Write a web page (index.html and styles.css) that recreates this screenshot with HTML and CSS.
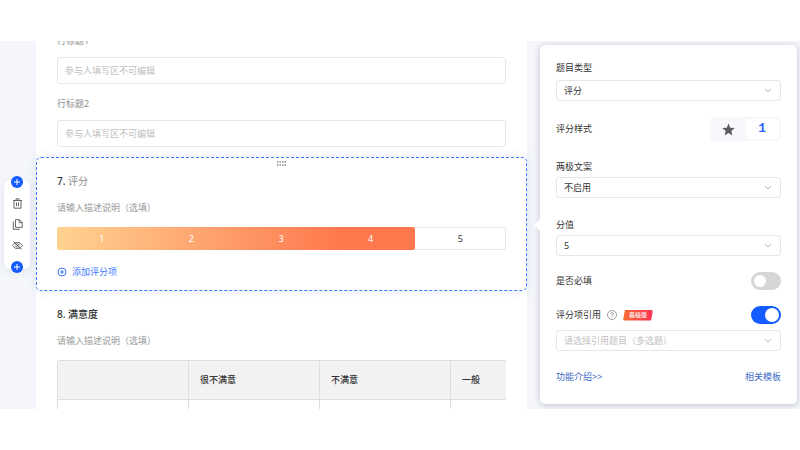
FILE: index.html
```html
<!DOCTYPE html>
<html lang="zh-CN">

<head>
    <meta charset="UTF-8">
    <meta name="viewport" content="width=device-width, initial-scale=1.0">
    <title>问卷编辑</title>
    <link rel="stylesheet" href="styles.css">
</head>

<body>
    <div class="editor">
        <aside class="rail">
            <div class="tools">
                <button class="add" aria-label="在上方添加">
                    <svg viewBox="0 0 12 12"><path d="M6 3v6M3 6h6"/></svg>
                </button>
                <button class="tool" aria-label="删除">
                    <svg viewBox="0 0 11 11"><path d="M1 2.5h9M4 2.5V.8h3v1.7M2 2.5v7.7h7V2.5M4.5 4.5v3.7M6.5 4.5v3.7"/></svg>
                </button>
                <button class="tool" aria-label="复制">
                    <svg viewBox="0 0 11 11"><path d="M3.5.7h4l2.7 2.7v5H3.5zM7.2.7v3h3M1.3 2.5v7.8h6.5"/></svg>
                </button>
                <button class="tool" aria-label="隐藏">
                    <svg viewBox="0 0 11 11"><path d="M.6 5.5C3 1.4 8 1.4 10.4 5.5C8 9.6 3 9.6 .6 5.5zM1.5 1.5l8 8"/><circle cx="5.5" cy="5.5" r="1.7"/></svg>
                </button>
                <button class="add" aria-label="在下方添加">
                    <svg viewBox="0 0 12 12"><path d="M6 3v6M3 6h6"/></svg>
                </button>
            </div>
        </aside>

        <main class="form">
            <section class="rows">
                <label for="row1">行标题1</label>
                <input type="text" id="row1" placeholder="参与人填写区不可编辑" readonly>
                <label for="row2">行标题2</label>
                <input type="text" id="row2" placeholder="参与人填写区不可编辑" readonly>
            </section>

            <section class="question active">
                <svg class="handle" viewBox="0 0 9 5"><path d="M0 1h9M0 4h9"/></svg>
                <h2>7. <span>评分</span></h2>
                <p class="desc">请输入描述说明（选填）</p>
                <div class="scale">
                    <div class="scale-on">
                        <button>1</button>
                        <button>2</button>
                        <button>3</button>
                        <button>4</button>
                    </div>
                    <button class="scale-off">5</button>
                </div>
                <button class="add-item">
                    <svg viewBox="0 0 10 10"><circle cx="5" cy="5" r="4"/><path d="M5 3v4M3 5h4"/></svg>
                    添加评分项
                </button>
            </section>

            <section class="question">
                <h2>8. 满意度</h2>
                <p class="desc">请输入描述说明（选填）</p>
                <div class="table-wrap">
                    <table>
                        <tr>
                            <th></th>
                            <th>很不满意</th>
                            <th>不满意</th>
                            <th>一般</th>
                            <th>满意</th>
                        </tr>
                        <tr>
                            <td></td>
                            <td></td>
                            <td></td>
                            <td></td>
                            <td></td>
                        </tr>
                    </table>
                </div>
            </section>
        </main>

        <aside class="panel">
            <div class="field">
                <label for="type">题目类型</label>
                <div class="select">
                    <select id="type"><option>评分</option></select>
                    <svg viewBox="0 0 8 6"><path d="M1 1l3 3 3-3"/></svg>
                </div>
            </div>

            <div class="line style-line">
                <span>评分样式</span>
                <div class="segment">
                    <label>
                        <input type="radio" name="style" aria-label="星形">
                        <svg viewBox="0 0 24 24"><path d="M12 1l3.2 7.7 8.3.7-6.3 5.4 1.9 8.1L12 18.6l-7.1 4.3 1.9-8.1L.5 9.4l8.3-.7z"/></svg>
                    </label>
                    <label>
                        <input type="radio" name="style" checked>
                        <span>1</span>
                    </label>
                </div>
            </div>

            <div class="field">
                <label for="poles">两极文案</label>
                <div class="select">
                    <select id="poles"><option>不启用</option></select>
                    <svg viewBox="0 0 8 6"><path d="M1 1l3 3 3-3"/></svg>
                </div>
            </div>

            <div class="field">
                <label for="score">分值</label>
                <div class="select">
                    <select id="score"><option>5</option></select>
                    <svg viewBox="0 0 8 6"><path d="M1 1l3 3 3-3"/></svg>
                </div>
            </div>

            <div class="line">
                <label for="required">是否必填</label>
                <input type="checkbox" class="switch" id="required">
            </div>

            <div class="line quote-line">
                <div class="with-tag">
                    <label for="quote">评分项引用</label>
                    <svg class="help" viewBox="0 0 10 10"><circle cx="5" cy="5" r="4.5"/><path d="M3.6 4c0-1.9 2.8-1.9 2.8-.1C6.4 4.9 5 4.9 5 6M5 6.9v.8"/></svg>
                    <span class="tag">高级版</span>
                </div>
                <input type="checkbox" class="switch" id="quote" checked>
            </div>
            <div class="select empty">
                <select aria-label="引用题目"><option>请选择引用题目（多选题）</option></select>
                <svg viewBox="0 0 8 6"><path d="M1 1l3 3 3-3"/></svg>
            </div>

            <div class="links">
                <a href="#">功能介绍&gt;&gt;</a>
                <a href="#">相关模板</a>
            </div>
        </aside>
    </div>
</body>

</html>
```
FILE: styles.css
```css
:root{
    --blue: #145cff;
    --text: #333;
    --muted: #999;
    --border: #e6e6e6;
    --page: #f4f6fb;
}
*{
    margin: 0;
    padding: 0;
    box-sizing: border-box;
}
body{
    height: 100vh;
    padding: 41px 0;
    background: #fff;
    color: var(--text);
    font-family: "Noto Sans", "Noto Sans CJK SC", sans-serif;
    font-size: 9px;
    line-height: 16px;
}
button,
input,
select{
    font: inherit;
    color: inherit;
    background: none;
    border: none;
    outline: none;
}
button{
    cursor: pointer;
}
svg{
    display: block;
    fill: none;
    stroke: currentColor;
}
.editor{
    display: flex;
    align-items: flex-start;
    height: 100%;
    padding-right: 3px;
    overflow: hidden;
    background: var(--page);
}

/* left tools */
.rail{
    display: flex;
    align-items: center;
    flex: none;
    width: 36px;
    height: 100%;
    padding: 0 6px 2px 4px;
}
.tools{
    display: flex;
    flex-direction: column;
    align-items: center;
    gap: 10px;
    width: 26px;
    background: #fff;
    border-radius: 6px;
    box-shadow: 0 2px 8px rgba(40,60,110,0.1);
}
.tool{
    width: 11px;
    height: 11px;
    color: #666;
}
.add{
    width: 12px;
    height: 12px;
    color: #fff;
    background: var(--blue);
    border-radius: 50%;
}
.add:first-child{
    margin-top: -4px;
}
.add:last-child{
    margin-bottom: -4px;
}

/* form */
.form{
    flex: 1;
    min-width: 0;
    height: 100%;
    background: #fff;
}
.rows{
    display: flex;
    flex-direction: column;
    padding: 0 21px 10px;
    margin-top: -8px;
}
.rows label{
    margin-bottom: 8px;
    color: #8c8c8c;
}
.rows input{
    height: 27px;
    padding: 0 7px;
    border: 1px solid var(--border);
    border-radius: 3px;
}
.rows input + label{
    margin-top: 12px;
}
.rows input::placeholder{
    color: #bfbfbf;
}
.question{
    position: relative;
    padding: 15px 21px 10px;
}
.question.active{
    padding: 15px 20px 10px;
    border: 1px dashed #3f78ff;
    border-radius: 5px;
    box-shadow: 0 0 10px rgba(40,70,140,0.12);
}
.question h2{
    margin-bottom: 11px;
    font-size: 10px;
    font-weight: 500;
}
.question h2 span{
    color: #8c8c8c;
    font-weight: 400;
}
.desc{
    margin-bottom: 11px;
    color: var(--muted);
}
.handle{
    position: absolute;
    top: 3px;
    left: 50%;
    width: 9px;
    height: 5px;
    margin-left: -5px;
    color: #555;
    stroke-dasharray: 1.5 1;
}
.scale{
    display: flex;
    height: 23px;
    margin-bottom: 14px;
    border-radius: 3px;
}
.scale-on{
    display: flex;
    flex: 4;
    color: #fff;
    background: linear-gradient(90deg, #ffd391, #ff774d 80%);
    border-radius: 2px;
}
.scale-on button{
    flex: 1;
}
.scale-off{
    flex: 1;
    border: 1px solid var(--border);
    border-left: none;
    border-radius: 0 3px 3px 0;
}
.add-item{
    display: flex;
    align-items: center;
    gap: 5px;
    color: #3d77ff;
}
.add-item svg{
    width: 10px;
    height: 10px;
}
.table-wrap{
    overflow: hidden;
    border-left: 1px solid #ddd;
    border-top: 1px solid #ddd;
    border-radius: 3px 0 0 0;
}
table{
    width: 655px;
    table-layout: fixed;
    border-collapse: separate;
    border-spacing: 0;
}
th,
td{
    height: 39px;
    padding: 0 11px;
    text-align: left;
    font-weight: 500;
    border-right: 1px solid #ddd;
    border-bottom: 1px solid #ddd;
}
th{
    background: #f2f2f2;
}

/* settings */
.panel{
    position: relative;
    flex: none;
    width: 257px;
    margin: 4px 0 0 13px;
    padding: 15px 16px 19px;
    background: #fff;
    border-radius: 5px;
    box-shadow: 0 1px 6px rgba(30,40,80,0.25);
}
.panel::before{
    content: "";
    position: absolute;
    top: 173px;
    left: -6px;
    width: 7px;
    height: 14px;
    background: #fff;
    clip-path: polygon(100% 0, 0 50%, 100% 100%);
}
.field{
    margin-bottom: 16px;
}
.field label{
    display: block;
    margin-bottom: 2px;
}
.field:first-child label{
    margin-bottom: 4px;
}
.field + .field{
    margin-top: 19px;
}
.select{
    position: relative;
}
.select select{
    display: block;
    width: 100%;
    height: 21px;
    padding: 0 20px 0 7px;
    appearance: none;
    border: 1px solid var(--border);
    border-radius: 3px;
}
.select svg{
    position: absolute;
    top: 8px;
    right: 9px;
    width: 8px;
    height: 6px;
    color: #b5b5b5;
    pointer-events: none;
}
.select.empty select{
    color: #bfbfbf;
}
.line{
    display: flex;
    align-items: center;
    justify-content: space-between;
    margin-bottom: 16px;
}
.style-line{
    margin-bottom: 18px;
}
.quote-line{
    margin-bottom: 6px;
}
.segment{
    display: flex;
    width: 71px;
    height: 24px;
    padding: 2px;
    background: #f7f8fb;
    border-radius: 5px;
}
.segment label{
    display: flex;
    flex: 1;
    align-items: center;
    justify-content: center;
    color: #5c5c5c;
    border-radius: 4px;
}
.segment label:has(:checked){
    color: #2b68ff;
    background: #fff;
}
.segment input{
    position: absolute;
    opacity: 0;
}
.segment svg{
    width: 13px;
    height: 13px;
    fill: currentColor;
    stroke: none;
}
.segment span{
    font-family: "Liberation Mono", monospace;
    font-size: 13px;
    font-weight: 700;
}
.switch{
    width: 30px;
    height: 18px;
    padding: 3px;
    appearance: none;
    background: #d6d6d6;
    border-radius: 9px;
    cursor: pointer;
}
.switch::before{
    content: "";
    display: block;
    width: 12px;
    height: 12px;
    background: #fff;
    border-radius: 50%;
}
.switch:checked{
    padding: 2px;
    background: var(--blue);
}
.switch:checked::before{
    width: 14px;
    height: 14px;
    margin-left: auto;
}
.with-tag{
    display: flex;
    align-items: center;
    gap: 6px;
}
.help{
    width: 10px;
    height: 10px;
    color: #888;
    stroke-width: 0.8;
}
.tag{
    padding: 0 6px;
    color: #fff;
    font-size: 6px;
    font-weight: 500;
    line-height: 11px;
    background: linear-gradient(90deg, #f96c2f, #f93155);
    border-radius: 2px;
    clip-path: polygon(2px 0, 100% 0, calc(100% - 2px) 100%, 0 100%);
}
.links{
    display: flex;
    justify-content: space-between;
    margin-top: 18px;
}
.links a{
    color: #3f6ac4;
    text-decoration: none;
}
```
